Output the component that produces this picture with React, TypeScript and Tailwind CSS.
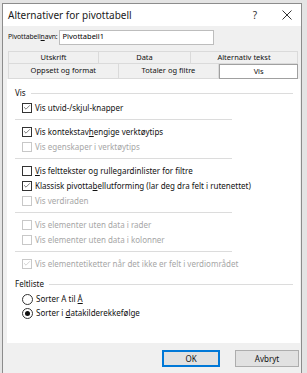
import { Check } from 'lucide-react';

type Row = { label: React.ReactNode; checked?: boolean; disabled?: boolean };

const Checkbox = ({ checked, disabled }: { checked?: boolean; disabled?: boolean }) => (
  <span
    className={`flex h-[10px] w-[10px] shrink-0 items-center justify-center border bg-white ${
      disabled ? 'border-[#c8c8c8]' : 'border-[#333333]'
    }`}
  >
    {checked && (
      <Check
        size={9}
        strokeWidth={1.75}
        className={disabled ? 'text-[#b4b4b4]' : 'text-[#222222]'}
      />
    )}
  </span>
);

const CheckRow = ({ label, checked, disabled }: Row) => (
  <div className="flex h-[15px] items-center gap-[3px] whitespace-nowrap pl-[15px]">
    <Checkbox checked={checked} disabled={disabled} />
    <span className={disabled ? 'text-[#a6a6a6]' : 'text-[#111111]'}>{label}</span>
  </div>
);

const Radio = ({ label, checked }: { label: React.ReactNode; checked?: boolean }) => (
  <div className="flex h-[14px] items-center gap-[3px] whitespace-nowrap pl-[15px]">
    <span className="flex h-[11px] w-[11px] shrink-0 items-center justify-center rounded-full border border-[#333333] bg-white">
      {checked && <span className="h-[5px] w-[5px] rounded-full bg-[#111111]" />}
    </span>
    <span className="text-[#111111]">{label}</span>
  </div>
);

const Sep = () => (
  <div className="py-[4px] pl-[8px]">
    <div className="h-px w-[217px] bg-[#dcdcdc]" />
  </div>
);

const GroupTitle = ({ children }: { children: React.ReactNode }) => (
  <div className="flex h-[14px] items-center gap-[5px] pl-[8px] pr-[7px]">
    <span className="text-[#111111]">{children}</span>
    <div className="h-px flex-1 bg-[#dcdcdc]" />
  </div>
);

const Tab = ({ children, w }: { children: React.ReactNode; w: string }) => (
  <div
    className={`flex items-center justify-center border-r border-b border-[#dadada] bg-[#f0f0f0] ${w}`}
  >
    {children}
  </div>
);

export default function App() {
  return (
    <div
      className="h-[373px] w-[307px] overflow-hidden bg-[#e4e4e4] pt-[3px] pl-[2px] text-[8px] leading-none"
      style={{ fontFamily: '"Noto Sans", "Liberation Sans", sans-serif' }}
    >
      <div className="h-[370px] w-[300px] border-l border-t border-r border-[#8c8c8c] bg-[#f0f0f0]">
        <div className="flex h-[22px] items-center bg-white pl-[5px] pr-[8px] text-[10px] text-[#1a1a1a]">
          <span>Alternativer for pivottabell</span>
          <span className="ml-auto mr-[25px] text-[10px] text-[#333]">?</span>
          <svg width="10" height="10" viewBox="0 0 10 10" className="mr-[1px]">
            <path d="M0.5 0.5 L9.5 9.5 M9.5 0.5 L0.5 9.5" stroke="#333" strokeWidth="1" />
          </svg>
        </div>

        <div className="flex h-[21px] items-center gap-[1px] pt-[1px] pl-[5px]">
          <span className="text-[6.8px] tracking-[-0.1px] text-[#111111]">
            Pivottabell<span className="underline">n</span>avn:
          </span>
          <div className="flex h-[15px] w-[155px] items-center border border-[#bdbdbd] bg-white px-[3px] text-[7.5px]">
            Pivottabell1
          </div>
        </div>

        <div className="mt-[4px] ml-[5px] w-[290px] text-[7.5px] text-[#111111]">
          <div className="flex h-[13px] border-t border-l border-[#dadada]">
            <Tab w="w-[90px]">Utskrift</Tab>
            <Tab w="w-[92px]">Data</Tab>
            <Tab w="w-[107px]">Alternativ tekst</Tab>
          </div>
          <div className="flex h-[15px] border-l border-[#dadada]">
            <Tab w="w-[110px]">Oppsett og format</Tab>
            <Tab w="w-[101px]">Totaler og filtre</Tab>
            <div className="flex w-[79px] items-center justify-center border border-[#a0a0a0] bg-white">
              Vis
            </div>
          </div>
        </div>

        <div className="ml-[4px] h-[264px] w-[293px] bg-white pt-[7px]">
          <GroupTitle>Vis</GroupTitle>
          <CheckRow checked label="Vis utvid-/skjul-knapper" />
          <Sep />
          <CheckRow
            checked
            label={
              <>
                Vis kontekstav<span className="underline">h</span>engige verktøytips
              </>
            }
          />
          <CheckRow disabled label="Vis egenskaper i verktøytips" />
          <Sep />
          <CheckRow
            label={
              <>
                <span className="underline">V</span>is felttekster og rullegardinlister for filtre
              </>
            }
          />
          <CheckRow
            checked
            label={
              <>
                Klassisk pivotta<span className="underline">b</span>ellutforming (lar deg dra felt i rutenettet)
              </>
            }
          />
          <CheckRow disabled label="Vis verdiraden" />
          <Sep />
          <CheckRow disabled label="Vis elementer uten data i rader" />
          <CheckRow disabled label="Vis elementer uten data i kolonner" />
          <Sep />
          <CheckRow disabled checked label="Vis elementetiketter når det ikke er felt i verdiområdet" />

          <div className="mt-[6px]">
            <GroupTitle>Feltliste</GroupTitle>
          </div>
          <div className="mt-[1px]">
            <Radio
              label={
                <>
                  Sorter A til <span className="underline">Å</span>
                </>
              }
            />
            <Radio
              checked
              label={
                <>
                  Sorter i <span className="underline">d</span>atakilderekkefølge
                </>
              }
            />
          </div>
        </div>

        <div className="mt-[7px] flex justify-end gap-[15px] pr-[2px] text-[#111111]">
          <div className="flex h-[17px] w-[58px] items-center justify-center border border-[#0078d7] bg-[#e1e1e1] ring-1 ring-inset ring-[#0078d7]">
            OK
          </div>
          <div className="flex h-[17px] w-[64px] items-center justify-center border border-[#adadad] bg-[#e1e1e1]">
            Avbryt
          </div>
        </div>
      </div>
    </div>
  );
}
